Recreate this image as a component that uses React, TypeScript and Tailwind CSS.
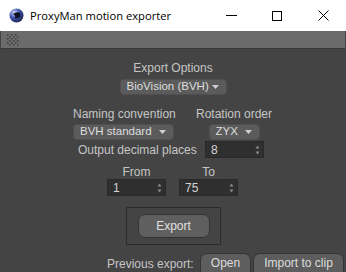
import React from 'react';

const Caret = () => (
    <svg width="7" height="4" viewBox="0 0 7 4" className="shrink-0">
        <path d="M0 0 L7 0 L3.5 4 Z" fill="#cfcfcf" />
    </svg>
);

const Spin = () => (
    <svg width="5" height="10" viewBox="0 0 5 10" className="shrink-0">
        <path d="M2.5 0.5 L4.5 3.5 L0.5 3.5 Z" fill="#8a8a8a" />
        <path d="M0.5 6.5 L4.5 6.5 L2.5 9.5 Z" fill="#8a8a8a" />
    </svg>
);

const Dropdown = ({ label, width }: { label: string; width: string }) => (
    <div
        className={`${width} h-[16px] flex items-center justify-between pl-[6px] pr-[7px] rounded-[4px] bg-[#5b5b5b] border border-[#4f4f4f] text-[#dedede] text-[11.5px] leading-none`}
    >
        <span>{label}</span>
        <Caret />
    </div>
);

const NumberBox = ({ value }: { value: string }) => (
    <div className="w-[59px] h-[17px] flex items-center justify-between pl-[5px] pr-[3px] bg-[#2f2f2f] border border-[#292929] text-[#d4d4d4] text-[12px] leading-none">
        <span>{value}</span>
        <Spin />
    </div>
);

const Grip = () => (
    <svg width="12" height="12" viewBox="0 0 12 12">
        {[0, 1, 2, 3, 4, 5].map(r =>
            [0, 1, 2, 3, 4, 5].map(c =>
                (r + c) % 2 === 0 ? <rect key={`${r}-${c}`} x={c * 2} y={r * 2} width="1.5" height="1.5" fill="#3f3f3f" /> : null
            )
        )}
    </svg>
);

const AppIcon = () => (
    <svg width="15" height="15" viewBox="0 0 15 15">
        <defs>
            <radialGradient id="g" cx="0.35" cy="0.3" r="0.8">
                <stop offset="0" stopColor="#d6defa" />
                <stop offset="0.45" stopColor="#4257b4" />
                <stop offset="1" stopColor="#141a3a" />
            </radialGradient>
        </defs>
        <circle cx="7.5" cy="7.5" r="7" fill="url(#g)" />
        <path d="M4 6 Q7.5 3 11.5 5 L11 9 Q8 11 5.5 10 Q7.5 8 4 6 Z" fill="#0e1226" />
    </svg>
);

export default function App() {
    return (
        <div className="w-[346px] h-[272px] flex flex-col bg-[#444444] overflow-hidden whitespace-nowrap" style={{ fontFamily: '"Liberation Sans", Arial, sans-serif' }}>
            {/* title bar */}
            <div className="h-[31px] bg-white flex items-center shrink-0" style={{ fontFamily: '"Open Sans", "Noto Sans", sans-serif' }}>
                <div className="pl-[9px] pr-[6px] flex items-center">
                    <AppIcon />
                </div>
                <span className="text-[11.2px] text-black leading-none">ProxyMan motion exporter</span>
                <div className="ml-auto flex items-center h-full">
                    <div className="w-[46px] h-full flex items-center justify-center">
                        <div className="w-[11px] h-px bg-black" />
                    </div>
                    <div className="w-[46px] h-full flex items-center justify-center">
                        <div className="w-[10px] h-[10px] border border-black" />
                    </div>
                    <div className="w-[46px] h-full flex items-center justify-center">
                        <svg width="11" height="11" viewBox="0 0 11 11">
                            <path d="M0.5 0.5 L10.5 10.5 M10.5 0.5 L0.5 10.5" stroke="#000" strokeWidth="1" />
                        </svg>
                    </div>
                </div>
            </div>

            {/* toolbar */}
            <div className="h-[18px] bg-[#6b6b6b] border-b border-[#383838] flex items-center pl-[6px] shrink-0 mx-px">
                <Grip />
            </div>

            <div className="flex-1 flex flex-col mx-px bg-[#444444] text-[#c6c6c6] text-[12px]">
                <div className="mt-[12px] h-[14px] flex justify-center items-center leading-none">Export Options</div>
                <div className="mt-[4px] flex justify-center">
                    <Dropdown label="BioVision (BVH)" width="w-[107px]" />
                </div>

                <div className="mt-[12px] flex pl-[72px] h-[14px] items-center leading-none">
                    <div className="w-[101px] text-center">Naming convention</div>
                    <div className="ml-[22px] w-[76px] text-center">Rotation order</div>
                </div>
                <div className="mt-[3px] flex pl-[72px]">
                    <div className="w-[101px] flex justify-center">
                        <Dropdown label="BVH standard" width="w-[101px]" />
                    </div>
                    <div className="ml-[22px] w-[76px] flex justify-center">
                        <Dropdown label="ZYX" width="w-[51px]" />
                    </div>
                </div>

                <div className="mt-[1px] flex pl-[77px] items-center">
                    <div className="w-[127px] leading-none">Output decimal places</div>
                    <NumberBox value="8" />
                </div>

                <div className="mt-[7px] flex pl-[106px] h-[13px] items-center leading-none">
                    <div className="w-[59px] text-center">From</div>
                    <div className="ml-[13px] w-[59px] text-center">To</div>
                </div>
                <div className="mt-[1px] flex pl-[106px] gap-[13px]">
                    <NumberBox value="1" />
                    <NumberBox value="75" />
                </div>

                <div className="mt-[11px] ml-[125px] w-[95px] h-[38px] border border-[#2c2c2c] flex items-center justify-center">
                    <div className="w-[72px] h-[24px] rounded-[7px] bg-[#5f5f5f] border border-[#333333] flex items-center justify-center text-[#e0e0e0] text-[12px] leading-none">
                        Export
                    </div>
                </div>

                <div className="mt-[8px] flex pl-[106px] items-start">
                    <div className="w-[93px] pt-[5px] leading-none">Previous export:</div>
                    <div className="w-[51px] h-[20px] rounded-t-[7px] bg-[#5d5d5d] border border-[#333333] flex items-center justify-center text-[#dcdcdc] leading-none">Open</div>
                    <div className="ml-[2px] w-[91px] h-[20px] rounded-t-[7px] bg-[#5d5d5d] border border-[#333333] flex items-center justify-center text-[#dcdcdc] leading-none">Import to clip</div>
                </div>
            </div>
        </div>
    );
}
